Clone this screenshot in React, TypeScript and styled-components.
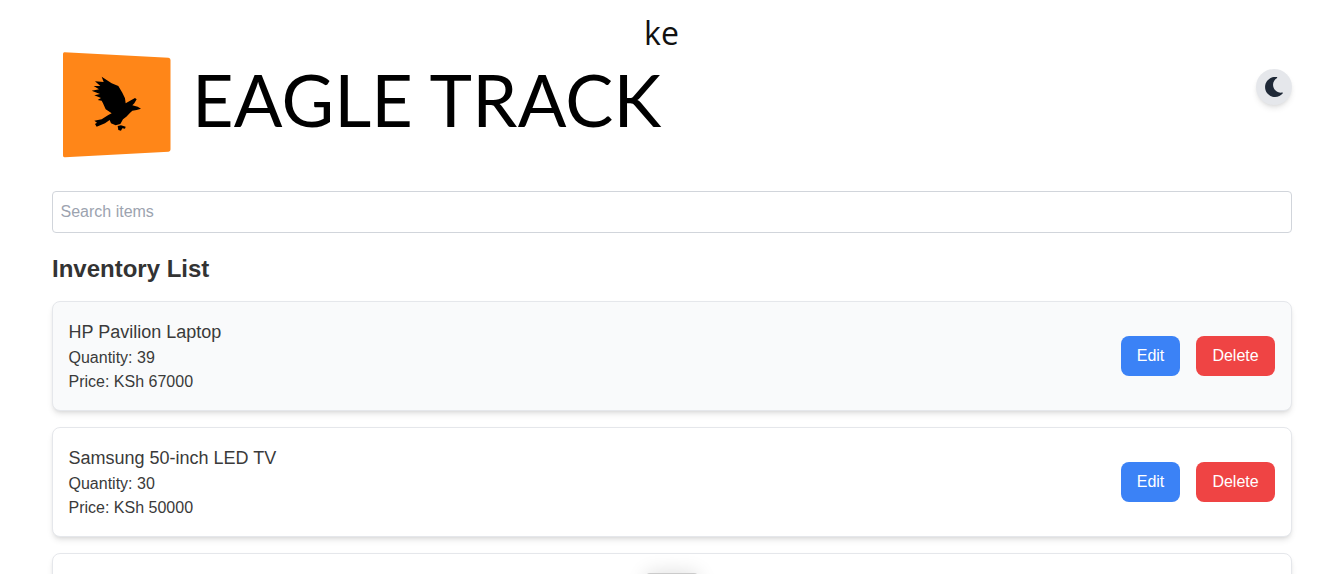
import { FC } from 'react';
import styled, { createGlobalStyle } from 'styled-components';

const GlobalStyle = createGlobalStyle`
  html, body {
    margin: 0;
    height: 574px;
    overflow: hidden;
    background: #fff;
    font-family: 'Liberation Sans', Arial, sans-serif;
  }
`;

const Page = styled.div`
  position: relative;
  height: 574px;
  overflow: hidden;
  padding: 0 38px 0 52px;
`;

const Country = styled.div`
  height: 52px;
  padding: 13px 7px 0 0;
  box-sizing: border-box;
  text-align: center;
  font-family: 'Open Sans', sans-serif;
  font-size: 32px;
  line-height: 40px;
  color: #111;
  margin-left: -52px;
  margin-right: -38px;
`;

const Header = styled.header`
  display: flex;
  align-items: flex-start;
  justify-content: space-between;
  height: 139px;
`;

const Brand = styled.div`
  display: flex;
  align-items: flex-start;
`;

const LogoMark = styled.svg`
  display: block;
  width: 120px;
  height: 108px;
`;

const Wordmark = styled.div`
  margin: 9px 0 0 20px;
  font-family: Lato, sans-serif;
  font-size: 72px;
  line-height: 76px;
  font-weight: 400;
  letter-spacing: 0.2px;
  color: #000;
  white-space: nowrap;
`;

const ThemeToggle = styled.button`
  width: 36px;
  height: 36px;
  margin-top: 17px;
  padding: 0;
  border: 0;
  border-radius: 50%;
  background: #e5e7eb;
  box-shadow: 0 4px 6px -1px rgba(0, 0, 0, 0.1), 0 2px 4px -2px rgba(0, 0, 0, 0.1);
  display: flex;
  align-items: center;
  justify-content: center;
  color: #1f2937;
`;

const MoonIcon = styled.svg`
  display: block;
  width: 20px;
  height: 20px;
`;

const SearchInput = styled.input`
  display: block;
  width: 100%;
  height: 42px;
  box-sizing: border-box;
  padding: 8px 8px 8px 7.5px;
  border: 1px solid #d1d5db;
  border-radius: 4px;
  font-family: 'Liberation Sans', Arial, sans-serif;
  font-size: 16px;
  outline: none;
  &::placeholder {
    color: #9ca3af;
  }
`;

const Title = styled.h2`
  margin: 20px 0 16px;
  font-size: 24px;
  line-height: 32px;
  font-weight: 700;
  color: #333;
`;

const List = styled.div`
  display: flex;
  flex-direction: column;
  gap: 16px;
`;

const Card = styled.div<{ $shaded?: boolean }>`
  display: flex;
  align-items: center;
  justify-content: space-between;
  min-height: 110px;
  box-sizing: border-box;
  padding: 16px 16px 16px 15.5px;
  border: 1px solid #e5e7eb;
  border-radius: 8px;
  background: ${({ $shaded }) => ($shaded ? '#f9fafb' : '#fff')};
  box-shadow: 0 4px 6px -1px rgba(0, 0, 0, 0.1), 0 2px 4px -2px rgba(0, 0, 0, 0.1);
  color: #3a3a3a;
`;

const ItemName = styled.div`
  font-size: 18px;
  line-height: 28px;
`;

const ItemLine = styled.div`
  font-size: 16px;
  line-height: 24px;
`;

const Actions = styled.div`
  display: flex;
  gap: 16px;
`;

const ActionButton = styled.button<{ $danger?: boolean }>`
  width: ${({ $danger }) => ($danger ? '79px' : '59px')};
  height: 40px;
  padding: 0;
  border: 0;
  border-radius: 8px;
  font-family: 'Liberation Sans', Arial, sans-serif;
  font-size: 16px;
  color: #fff;
  background: ${({ $danger }) => ($danger ? '#ef4444' : '#3b82f6')};
`;

const PeekingToast = styled.div`
  position: absolute;
  left: 646px;
  top: 573px;
  width: 52px;
  height: 20px;
  border-radius: 4px;
  background: #cbcbcb;
  box-shadow: 0 0 20px rgba(0, 0, 0, 0.14);
`;

const items = [
  { name: 'HP Pavilion Laptop', quantity: 39, price: 67000 },
  { name: 'Samsung 50-inch LED TV', quantity: 30, price: 50000 },
];

const Logo: FC = () => (
  <LogoMark viewBox="0 0 120 108" aria-hidden="true">
    <path
      d="M12.5 0.3 L116.5 5.8 Q118.5 6 118.5 8 L118.5 97.5 Q118.5 99.5 116.5 99.7 L13 105.3 Q11 105.4 11 103.4 L11 2 Q11 0.2 12.5 0.3 Z"
      fill="#ff8618"
    />
    {/* traced from the crop, so the numbers are crop pixels */}
    <g transform="translate(33 18) scale(0.3333)" fill="#000">
      <path d="M50 20 L80 40 L100 48 L112 68 L120 85 L122 100 L150 84 L155 88 L148 100 L142 106 L158 110 L168 116 L155 120 L142 122 L134 130 L124 140 L114 148 L106 162 L92 166 L78 160 L74 150 L60 160 L35 170 L30 162 L36 158 L28 152 L50 148 L70 135 L80 130 L62 118 L54 100 L50 92 L38 90 L48 84 L28 76 L45 72 L20 62 L42 58 L26 48 L46 48 L30 34 L56 36 Z" />
      <path d="M98 168 L108 166 L122 170 L120 176 L112 175 L108 182 L100 180 Z" />
    </g>
  </LogoMark>
);

const App: FC = () => (
  <Page>
    <GlobalStyle />
    <Country>ke</Country>
    <Header>
      <Brand>
        <Logo />
        <Wordmark>EAGLE TRACK</Wordmark>
      </Brand>
      <ThemeToggle aria-label="Toggle theme">
        <MoonIcon viewBox="0 0 512 512" fill="currentColor">
          <path d="M283.2 512c79 0 151.1-35.9 198.9-94.8 7.1-8.7-.6-21.4-11.6-19.3-124.6 23.7-239.1-71.8-239.1-197.7 0-72.5 38.8-139.2 101.9-175.1 9.7-5.5 7.3-20.2-3.8-22.2A258.2 258.2 0 0 0 283.2 0C141.9 0 27.2 114.6 27.2 256s114.6 256 256 256z" />
        </MoonIcon>
      </ThemeToggle>
    </Header>
    <SearchInput placeholder="Search items" />
    <Title>Inventory List</Title>
    <List>
      {items.map((item, i) => (
        <Card key={item.name} $shaded={i === 0}>
          <div>
            <ItemName>{item.name}</ItemName>
            <ItemLine>Quantity: {item.quantity}</ItemLine>
            <ItemLine>Price: KSh {item.price}</ItemLine>
          </div>
          <Actions>
            <ActionButton>Edit</ActionButton>
            <ActionButton $danger>Delete</ActionButton>
          </Actions>
        </Card>
      ))}
      <Card />
    </List>
    <PeekingToast />
  </Page>
);

export default App;
